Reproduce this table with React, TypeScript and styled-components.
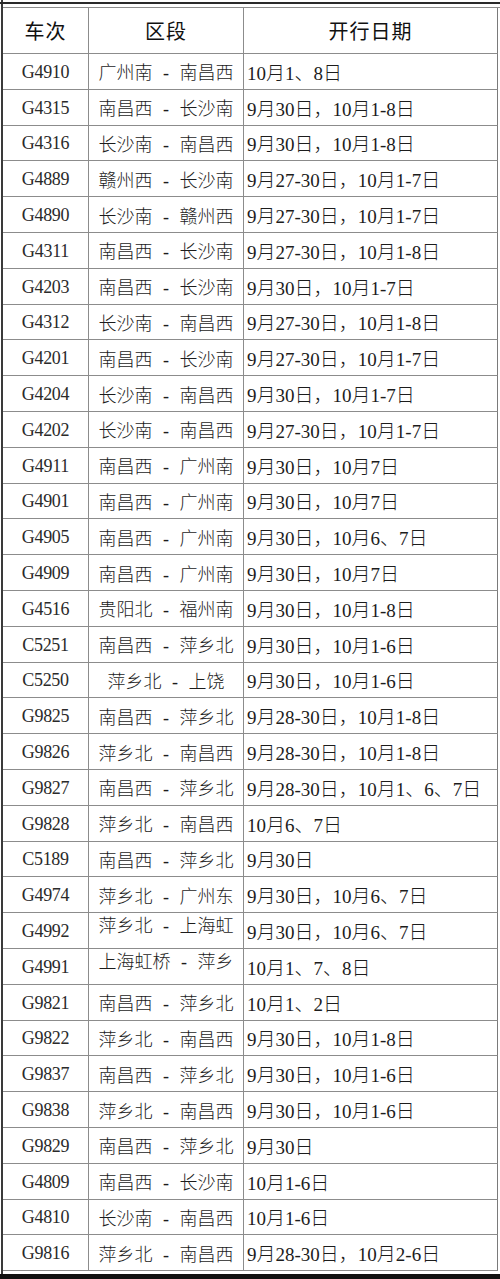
import React from "react";
import styled, { createGlobalStyle } from "styled-components";

const Global = createGlobalStyle`
  html, body { margin: 0; padding: 0; background: #fff; }
  body { font-family: "Liberation Serif", "Noto Sans CJK SC", serif; }
`;

const Page = styled.div`
  width: 499px;
  height: 1279px;
  margin-left: 1px;
  border-left: 2px solid #3a3a3a;
  box-sizing: border-box;
  display: flex;
  flex-direction: column;
  background: #fff;
`;

const TopRule = styled.div`
  height: 2px;
  margin-top: 2px;
  margin-left: -3px;
  width: 502px;
  background: #2a2a2a;
`;

const Table = styled.div`
  margin-top: 3px;
  display: grid;
  grid-template-columns: 86px 155px 254px;
  grid-template-rows: 46px repeat(34, 35.8px);
  border-top: 1px solid #8c8c8c;
`;

const Cell = styled.div<{ $align: "center" | "left"; $last?: boolean }>`
  box-sizing: border-box;
  border-bottom: 1px solid #8c8c8c;
  border-right: 1px solid ${(p) => (p.$last ? "#7a7a7a" : "#8c8c8c")};
  display: flex;
  align-items: center;
  justify-content: ${(p) => (p.$align === "center" ? "center" : "flex-start")};
  padding-left: ${(p) => (p.$align === "left" ? "3px" : "0")};
  color: #1c1c1c;
  white-space: nowrap;
  overflow: hidden;
`;

const HeadText = styled.span`
  font-family: "Noto Sans CJK SC", sans-serif;
  font-weight: 400;
  font-size: 20px;
  color: #111;
  letter-spacing: 1px;
`;

const TrainText = styled.span`
  font-family: "Liberation Serif", serif;
  font-size: 18px;
  letter-spacing: -0.3px;
  color: #2a2a2a;
  padding-top: 2px;
`;

const RouteText = styled.span<{ $lift?: number }>`
  font-family: "Liberation Serif", "Noto Sans CJK SC", serif;
  font-weight: 300;
  font-size: 18px;
  word-spacing: 6px;
  transform: translateY(${(p) => -(p.$lift ?? 0)}px);
`;

const DateText = styled.span`
  font-family: "Liberation Serif", "Noto Sans CJK SC", serif;
  font-weight: 300;
  font-size: 19px;
`;

const Spacer = styled.div`
  flex: 1;
`;

const BottomBar = styled.div`
  height: 5px;
  margin-left: -3px;
  width: 502px;
  background: #111;
`;

type Row = [string, string, string, number?];

const rows: Row[] = [
  ["G4910", "广州南 - 南昌西", "10月1、8日"],
  ["G4315", "南昌西 - 长沙南", "9月30日，10月1-8日"],
  ["G4316", "长沙南 - 南昌西", "9月30日，10月1-8日"],
  ["G4889", "赣州西 - 长沙南", "9月27-30日，10月1-7日"],
  ["G4890", "长沙南 - 赣州西", "9月27-30日，10月1-7日"],
  ["G4311", "南昌西 - 长沙南", "9月27-30日，10月1-8日"],
  ["G4203", "南昌西 - 长沙南", "9月30日，10月1-7日"],
  ["G4312", "长沙南 - 南昌西", "9月27-30日，10月1-8日"],
  ["G4201", "南昌西 - 长沙南", "9月27-30日，10月1-7日"],
  ["G4204", "长沙南 - 南昌西", "9月30日，10月1-7日"],
  ["G4202", "长沙南 - 南昌西", "9月27-30日，10月1-7日"],
  ["G4911", "南昌西 - 广州南", "9月30日，10月7日"],
  ["G4901", "南昌西 - 广州南", "9月30日，10月7日"],
  ["G4905", "南昌西 - 广州南", "9月30日，10月6、7日"],
  ["G4909", "南昌西 - 广州南", "9月30日，10月7日"],
  ["G4516", "贵阳北 - 福州南", "9月30日，10月1-8日"],
  ["C5251", "南昌西 - 萍乡北", "9月30日，10月1-6日"],
  ["C5250", "萍乡北 - 上饶", "9月30日，10月1-6日"],
  ["G9825", "南昌西 - 萍乡北", "9月28-30日，10月1-8日"],
  ["G9826", "萍乡北 - 南昌西", "9月28-30日，10月1-8日"],
  ["G9827", "南昌西 - 萍乡北", "9月28-30日，10月1、6、7日"],
  ["G9828", "萍乡北 - 南昌西", "10月6、7日"],
  ["C5189", "南昌西 - 萍乡北", "9月30日"],
  ["G4974", "萍乡北 - 广州东", "9月30日，10月6、7日"],
  ["G4992", "萍乡北 - 上海虹", "9月30日，10月6、7日", 7],
  ["G4991", "上海虹桥 - 萍乡", "10月1、7、8日", 6],
  ["G9821", "南昌西 - 萍乡北", "10月1、2日"],
  ["G9822", "萍乡北 - 南昌西", "9月30日，10月1-8日"],
  ["G9837", "南昌西 - 萍乡北", "9月30日，10月1-6日"],
  ["G9838", "萍乡北 - 南昌西", "9月30日，10月1-6日"],
  ["G9829", "南昌西 - 萍乡北", "9月30日"],
  ["G4809", "南昌西 - 长沙南", "10月1-6日"],
  ["G4810", "长沙南 - 南昌西", "10月1-6日"],
  ["G9816", "萍乡北 - 南昌西", "9月28-30日，10月2-6日"],
];

export default function App() {
  return (
    <>
      <Global />
      <Page>
        <TopRule />
        <Table>
          <Cell $align="center">
            <HeadText>车次</HeadText>
          </Cell>
          <Cell $align="center">
            <HeadText>区段</HeadText>
          </Cell>
          <Cell $align="center" $last>
            <HeadText>开行日期</HeadText>
          </Cell>
          {rows.map(([train, route, dates, lift]) => (
            <React.Fragment key={train}>
              <Cell $align="center">
                <TrainText>{train}</TrainText>
              </Cell>
              <Cell $align="center">
                <RouteText $lift={lift}>{route}</RouteText>
              </Cell>
              <Cell $align="left" $last>
                <DateText>{dates}</DateText>
              </Cell>
            </React.Fragment>
          ))}
        </Table>
        <Spacer />
        <BottomBar />
      </Page>
    </>
  );
}
